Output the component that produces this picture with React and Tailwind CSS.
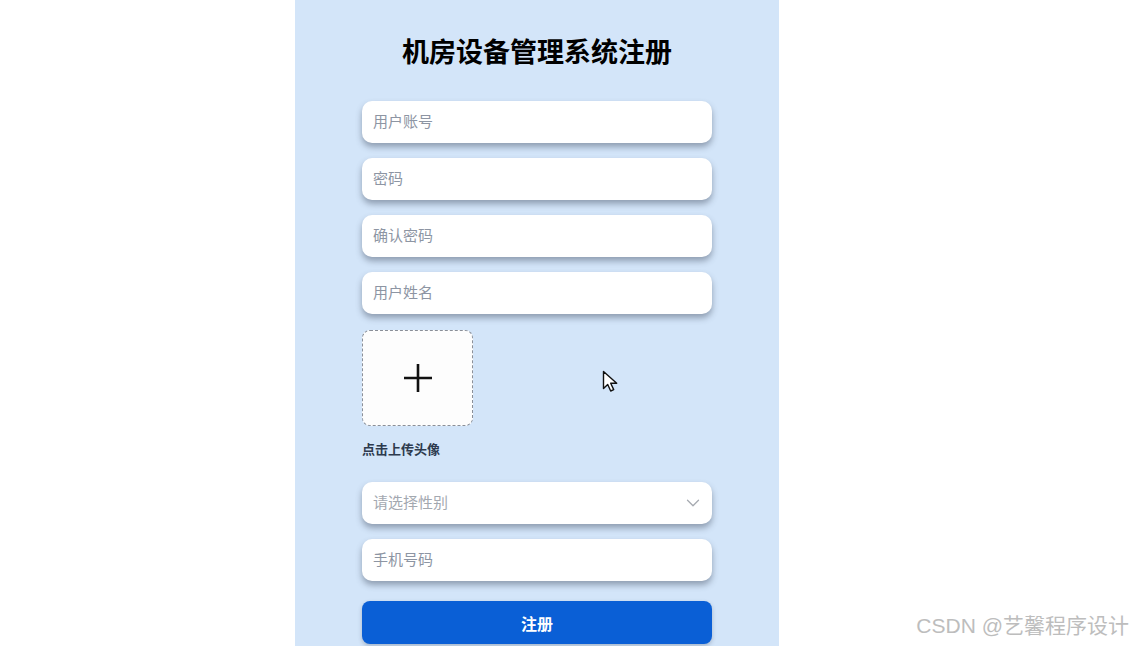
import React from 'react';
import { ChevronDown } from 'lucide-react';

const font = { fontFamily: '"Noto Sans CJK SC", "Noto Sans", sans-serif' };

const Field = ({ placeholder }) => (
    <div className="h-[42px] w-[350px] rounded-[10px] bg-white flex items-center px-[11px] shadow-[0_4px_6px_rgba(60,70,90,0.45)]">
        <span className="text-[15px] leading-[18px] -mt-[2px] text-[#8d95a3]">{placeholder}</span>
    </div>
);

export default function App() {
    return (
        <div className="relative w-[1133px] h-[646px] bg-white overflow-hidden" style={font}>
            <div className="ml-[295px] w-[484px] h-[646px] bg-[#d3e5f9] flex flex-col pl-[67px]">
                <h1 className="mt-[35px] h-[31px] w-[350px] text-center text-[27px] leading-[31px] font-bold text-black">
                    机房设备管理系统注册
                </h1>

                <div className="mt-[35px] flex flex-col gap-[15px]">
                    <Field placeholder="用户账号" />
                    <Field placeholder="密码" />
                    <Field placeholder="确认密码" />
                    <Field placeholder="用户姓名" />
                </div>

                {/* avatar upload */}
                <div className="mt-[16px] w-[111px] h-[96px] rounded-[8px] border border-dashed border-[#8a8f98] bg-[#fdfdfd] flex items-center justify-center">
                    <svg width="32" height="32" viewBox="0 0 32 32">
                        <path d="M16 2v28M2 16h28" stroke="#111" strokeWidth="2.6" />
                    </svg>
                </div>
                <p className="mt-[15px] h-[16px] text-[13px] leading-[16px] font-bold text-[#2d3a4e]">点击上传头像</p>

                <div className="mt-[25px] flex flex-col gap-[15px]">
                    <div className="h-[42px] w-[350px] rounded-[10px] bg-white flex items-center justify-between pl-[11px] pr-[8px] shadow-[0_4px_6px_rgba(60,70,90,0.45)]">
                        <span className="text-[15px] leading-[18px] -mt-[2px] text-[#a3a8b0]">请选择性别</span>
                        <ChevronDown size={22} className="text-[#a6aab1]" strokeWidth={1.4} />
                    </div>
                    <Field placeholder="手机号码" />
                </div>

                <button className="mt-[20px] h-[43px] w-[350px] rounded-[8px] bg-[#0a5fd6] text-white text-[16px] font-bold shadow-[0_2px_4px_rgba(60,70,90,0.3)]">
                    注册
                </button>
            </div>

            {/* mouse cursor */}
            <svg className="absolute left-[602px] top-[370px]" width="18" height="24" viewBox="0 0 18 24">
                <path d="M1.5 1.5v17l4.2-4 3 6.5 3-1.4-3-6.4h6z" fill="#fff" stroke="#111" strokeWidth="1.4" strokeLinejoin="round" />
            </svg>

            <span
                className="absolute right-[4px] top-[612px] text-[21px] leading-[28px] text-[#bdbdbd]"
                style={{ fontFamily: '"Liberation Sans", "Noto Sans CJK SC", sans-serif' }}
            >
                CSDN @艺馨程序设计
            </span>
        </div>
    );
}
